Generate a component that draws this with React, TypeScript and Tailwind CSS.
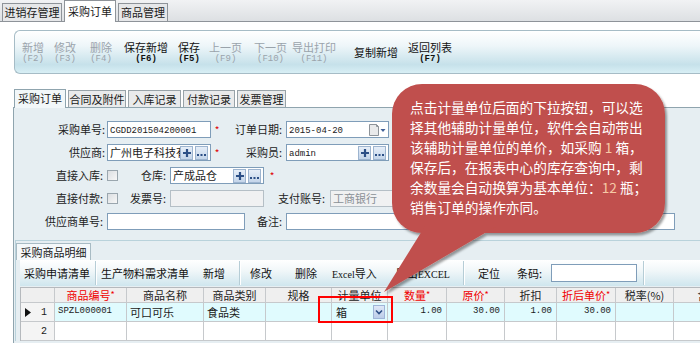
import React from "react";

const tools = [
  { label: "新增", key: "(F2)", off: true, cls: "ml-[7px]" },
  { label: "修改", key: "(F3)", off: true, cls: "ml-[10px]" },
  { label: "删除", key: "(F4)", off: true, cls: "ml-[14px]" },
  { label: "保存新增", key: "(F6)", off: false, cls: "ml-[12px]" },
  { label: "保存", key: "(F5)", off: false, cls: "ml-[10px]" },
  { label: "上一页", key: "(F9)", off: true, cls: "ml-[9px]" },
  { label: "下一页", key: "(F10)", off: true, cls: "ml-[12px]" },
  { label: "导出打印", key: "(F11)", off: true, cls: "ml-[5px]" },
  { label: "复制新增", key: "", off: false, cls: "ml-[18px]" },
  { label: "返回列表", key: "(F7)", off: false, cls: "ml-[10px]" },
];

const orderTabs = [
  { t: "采购订单", w: "w-[52px]", on: true },
  { t: "合同及附件", w: "w-[58px]", on: false },
  { t: "入库记录", w: "w-[53px]", on: false },
  { t: "付款记录", w: "w-[52px]", on: false },
  { t: "发票管理", w: "w-[49px]", on: false },
];

const heads = [
  { t: "", red: false },
  { t: "商品编号", red: true },
  { t: "商品名称", red: false },
  { t: "商品类别", red: false },
  { t: "规格", red: false },
  { t: "计量单位", red: false },
  { t: "数量", red: true },
  { t: "原价", red: true },
  { t: "折扣", red: false },
  { t: "折后单价", red: true },
  { t: "税率(%)", red: false },
  { t: "含税", red: false },
];

const gridCols =
  "grid grid-cols-[34px_72px_77px_62px_66px_56px_59px_58px_52px_59px_58px_70px]";

const mono = "font-['Liberation_Mono','DejaVu_Sans_Mono',monospace]";

function PlusBtn() {
  return (
    <span className="flex items-center justify-center w-[13px] h-[14px] border border-[#9db4cf] bg-gradient-to-b from-[#e6eef8] to-[#c4d5ea]">
      <svg width="10" height="10" viewBox="0 0 10 10">
        <path d="M5 1V9M1 5H9" stroke="#2c4f86" strokeWidth="2.2" />
      </svg>
    </span>
  );
}

function DotsBtn() {
  return (
    <span className="ml-[2px] flex items-end justify-center w-[13px] h-[14px] pb-[3px] border border-[#9db4cf] bg-gradient-to-b from-[#e6eef8] to-[#c4d5ea]">
      <svg width="9" height="2" viewBox="0 0 9 2">
        <rect x="0" y="0" width="2" height="2" fill="#2c4f86" />
        <rect x="3.5" y="0" width="2" height="2" fill="#2c4f86" />
        <rect x="7" y="0" width="2" height="2" fill="#2c4f86" />
      </svg>
    </span>
  );
}

function Field({
  w,
  children,
  gray,
  btns,
  extra,
}: {
  w: string;
  children?: React.ReactNode;
  gray?: boolean;
  btns?: boolean;
  extra?: React.ReactNode;
}) {
  return (
    <div
      className={`${w} h-[17px] shrink-0 flex items-center border pl-[2px] pr-[2px] ${
        gray ? "bg-[#f0f1f2] border-[#b5bfc6] text-[#8a9096]" : "bg-white border-[#7f9db9]"
      }`}
    >
      <span className="flex-1 min-w-0 overflow-hidden whitespace-nowrap leading-[15px]">{children}</span>
      {btns && (
        <span className="flex items-center">
          <PlusBtn />
          <DotsBtn />
        </span>
      )}
      {extra}
    </div>
  );
}

function Label({ w, children }: { w: string; children: React.ReactNode }) {
  return <span className={`${w} shrink-0 text-right whitespace-nowrap text-[#222]`}>{children}</span>;
}

function Star({ cls }: { cls: string }) {
  return <span className={`${cls} w-[6px] shrink-0 text-center text-[#e00000] text-[10px] leading-[10px]`}>*</span>;
}

function Check() {
  return <span className="ml-[4px] w-[11px] h-[11px] shrink-0 border border-[#9aa6ae] bg-gradient-to-br from-[#dcdfe2] to-[#f7f7f7]" />;
}

function CalendarIcon() {
  return (
    <svg width="18" height="12" viewBox="0 0 18 12" className="shrink-0">
      <path d="M1.5 0.5H8.5L10.5 2.5V11.5H1.5Z" fill="#e9eaeb" stroke="#8d9399" />
      <path d="M8.5 0.5V2.5H10.5" fill="none" stroke="#8d9399" />
      <path d="M12.5 5H17.5L15 8Z" fill="#3f5f96" />
    </svg>
  );
}

function TopTabs() {
  return (
    <div className="h-[22px] flex items-end pl-[2px] gap-[2px] bg-gradient-to-b from-[#f1f2f4] to-[#dde0e3] border-b border-[#8e9399]">
      <div className="w-[60px] h-[19px] -mb-px border border-[#8e9399] bg-[#e6e7e9] text-center leading-[17px]">进销存管理</div>
      <div className="w-[52px] h-[22px] -mb-px border border-b-0 border-[#8e9399] bg-white text-center leading-[20px]">采购订单</div>
      <div className="w-[50px] h-[19px] -mb-px border border-[#8e9399] bg-[#e6e7e9] text-center leading-[17px]">商品管理</div>
    </div>
  );
}

function Toolbar() {
  return (
    <div className="mt-[8px] ml-[14px] h-[44px] flex items-center rounded-l-[6px] border border-r-0 border-[#a6bcc6] bg-[linear-gradient(to_bottom,#ffffff_0%,#eef6f9_35%,#c6e1ea_80%,#d8eff5_100%)]">
      {tools.map((b) => (
        <div
          key={b.label}
          className={`${b.cls} flex flex-col items-center ${b.off ? "text-[#9aa3ab]" : "text-[#111]"}`}
        >
          <span className="leading-[13px] whitespace-nowrap">{b.label}</span>
          {b.key && <span className={`${mono} text-[9px] leading-[10px] ${b.off ? "" : "font-bold"}`}>{b.key}</span>}
        </div>
      ))}
    </div>
  );
}

function OrderTabs() {
  return (
    <div className="mt-[15px] ml-[14px] h-[18px] flex items-end gap-[2px]">
      {orderTabs.map((t) => (
        <div
          key={t.t}
          className={`${t.w} text-center whitespace-nowrap border border-b-0 ${
            t.on
              ? "relative z-10 h-[19px] -mb-px bg-[#f2f7f9] border-[#8fa4ae] leading-[17px]"
              : "h-[17px] bg-[#e9eaeb] border-[#98a2a8] leading-[16px]"
          }`}
        >
          {t.t}
        </div>
      ))}
    </div>
  );
}

function Form() {
  return (
    <div className="pt-[13px] flex flex-col gap-[6px]">
      <div className="h-[17px] flex items-center">
        <Label w="w-[91px]">采购单号:</Label>
        <div className="ml-[2px]">
          <Field w="w-[104px]">
            <span className={`${mono} text-[9px]`}>CGDD201504200001</span>
          </Field>
        </div>
        <Star cls="ml-[3px]" />
        <Label w="w-[62px]">订单日期:</Label>
        <div className="ml-[4px]">
          <Field w="w-[103px]" extra={<CalendarIcon />}>
            <span className={`${mono} text-[9px]`}>2015-04-20</span>
          </Field>
        </div>
      </div>
      <div className="h-[17px] flex items-center">
        <Label w="w-[91px]">供应商:</Label>
        <div className="ml-[2px]">
          <Field w="w-[104px]" btns>
            广州电子科技有
          </Field>
        </div>
        <Star cls="ml-[3px]" />
        <Label w="w-[62px]">采购员:</Label>
        <div className="ml-[4px]">
          <Field w="w-[103px]" btns>
            <span className={`${mono} text-[9px]`}>admin</span>
          </Field>
        </div>
      </div>
      <div className="h-[17px] flex items-center">
        <Label w="w-[89px]">直接入库:</Label>
        <Check />
        <Label w="w-[48px]">仓库:</Label>
        <div className="ml-[4px]">
          <Field w="w-[94px]" btns>
            产成品仓
          </Field>
        </div>
        <Star cls="ml-[5px]" />
      </div>
      <div className="h-[17px] flex items-center">
        <Label w="w-[89px]">直接付款:</Label>
        <Check />
        <Label w="w-[48px]">发票号:</Label>
        <div className="ml-[4px]">
          <Field w="w-[94px]" gray />
        </div>
        <Label w="w-[61px]">支付账号:</Label>
        <div className="ml-[5px]">
          <Field w="w-[100px]" gray>
            工商银行
          </Field>
        </div>
      </div>
      <div className="h-[17px] flex items-center">
        <Label w="w-[89px]">供应商单号:</Label>
        <div className="ml-[4px]">
          <Field w="w-[138px]" />
        </div>
        <Label w="w-[37px]">备注:</Label>
        <div className="ml-[4px]">
          <Field w="w-[389px]" />
        </div>
      </div>
    </div>
  );
}

function Sep({ cls }: { cls: string }) {
  return <span className={`${cls} w-[2px] h-[24px] shrink-0 border-l border-[#b6cdd6] border-r border-r-white`} />;
}

function DetailBar() {
  return (
    <div className="ml-[4px] h-[26px] flex items-center whitespace-nowrap text-[#111] bg-[linear-gradient(to_bottom,#ffffff_0%,#f1f7f9_40%,#cfe6ee_100%)]">
      <span className="ml-[4px]">采购申请清单</span>
      <Sep cls="ml-[5px]" />
      <span className="ml-[4px]">生产物料需求清单</span>
      <span className="ml-[14px]">新增</span>
      <Sep cls="ml-[14px]" />
      <span className="ml-[9px]">修改</span>
      <span className="ml-[23px]">删除</span>
      <span className="ml-[15px]">
        <span className="font-['Liberation_Serif',serif] text-[10px]">Excel</span>导入
      </span>
      <span className="ml-[19px]">
        导出<span className="font-['Liberation_Serif',serif] text-[10px]">EXCEL</span>
      </span>
      <Sep cls="ml-[13px]" />
      <span className="ml-[13px]">定位</span>
      <span className="ml-[17px]">条码:</span>
      <span className="ml-[9px] w-[86px] h-[18px] shrink-0 border border-[#7f9db9] bg-white" />
      <Sep cls="ml-[6px]" />
    </div>
  );
}

function Grid() {
  const cell = "border-r border-b border-[#c6c9cc] h-full flex items-center overflow-hidden whitespace-nowrap";
  return (
    <div className="mt-[1px] ml-[4px] border-l border-t border-[#b5b9bd]">
      <div className={`${gridCols} h-[15px] bg-[#efefef]`}>
        {heads.map((h, i) => (
          <div key={i} className={`${cell} justify-center ${h.red ? "text-[#f00000]" : "text-[#222]"}`}>
            {h.t}
            {h.red && <span className="text-[9px]">*</span>}
          </div>
        ))}
      </div>
      <div className={`${gridCols} h-[19px] bg-[#e0fbfe]`}>
        <div className={`${cell} bg-[#f4f4f4] justify-between pl-[4px] pr-[7px]`}>
          <svg width="6" height="9" viewBox="0 0 6 9">
            <path d="M0 0L6 4.5L0 9Z" fill="#111" />
          </svg>
          <span className={`${mono} text-[10px]`}>1</span>
        </div>
        <div className={`${cell} pl-[3px] ${mono} text-[9px]`}>SPZL000001</div>
        <div className={`${cell} pl-[3px]`}>可口可乐</div>
        <div className={`${cell} pl-[3px]`}>食品类</div>
        <div className={cell} />
        <div className={`${cell} pl-[4px] justify-between pr-[2px]`}>
          <span>箱</span>
          <span className="w-[12px] h-[14px] flex items-center justify-center border border-[#9fb5d8] bg-gradient-to-b from-[#dfe8f7] to-[#bccde9]">
            <svg width="8" height="6" viewBox="0 0 8 6">
              <path d="M1 1.5L4 4.5L7 1.5" fill="none" stroke="#2c4f86" strokeWidth="1.6" />
            </svg>
          </span>
        </div>
        <div className={`${cell} justify-end pr-[4px] ${mono} text-[9px]`}>1.00</div>
        <div className={`${cell} justify-end pr-[4px] ${mono} text-[9px]`}>30.00</div>
        <div className={`${cell} justify-end pr-[4px] ${mono} text-[9px]`}>1.00</div>
        <div className={`${cell} justify-end pr-[4px] ${mono} text-[9px]`}>30.00</div>
        <div className={cell} />
        <div className={cell} />
      </div>
      <div className={`${gridCols} h-[19px] bg-white`}>
        <div className={`${cell} bg-[#f4f4f4] justify-end pr-[7px]`}>
          <span className={`${mono} text-[10px]`}>2</span>
        </div>
        {Array.from({ length: 11 }).map((_, i) => (
          <div key={i} className={cell} />
        ))}
      </div>
    </div>
  );
}

function Panel() {
  return (
    <div className="ml-[13px] h-[236px] border-l border-t border-[#8fa4ae] bg-[#e6eef2]">
      <Form />
      <div className="ml-[1px] mt-[10px] border-t border-l border-[#b9d2db] pt-[2px]">
        <div className="w-[75px] h-[17px] bg-[#f4f8fa] border border-b-0 border-[#a8bbc4] text-center leading-[16px]">
          采购商品明细
        </div>
        <DetailBar />
        <Grid />
      </div>
    </div>
  );
}

function Callout() {
  return (
    <>
      <svg className="absolute left-0 top-0 pointer-events-none" width="700" height="354" viewBox="0 0 700 354">
        <defs>
          <filter id="sh" x="-10%" y="-10%" width="120%" height="130%">
            <feDropShadow dx="2" dy="2.5" stdDeviation="1.2" floodColor="#000" floodOpacity="0.38" />
          </filter>
        </defs>
        <g filter="url(#sh)" fill="#c0504d">
          <rect x="392" y="84" width="273" height="149" rx="30" ry="30" />
          <path d="M425 226L497 226L384 292Z" />
        </g>
      </svg>
      <div className="absolute left-[410px] top-[97px] text-white text-[13.7px] leading-[20px] whitespace-nowrap">
        <div>点击计量单位后面的下拉按钮，可以选</div>
        <div>择其他辅助计量单位，软件会自动带出</div>
        <div>
          该辅助计量单位的单价，如采购 <span className="text-[#f6c9a6]">1</span> 箱，
        </div>
        <div>保存后，在报表中心的库存查询中，剩</div>
        <div>
          余数量会自动换算为基本单位：<span className="text-[#f6c9a6]">12</span> 瓶；
        </div>
        <div>销售订单的操作亦同。</div>
      </div>
    </>
  );
}

export default function App() {
  return (
    <div className="relative w-[700px] h-[354px] overflow-hidden bg-white text-[11px] text-[#1a1a1a] font-['Noto_Sans_CJK_SC','Noto_Sans',sans-serif]">
      <TopTabs />
      <Toolbar />
      <OrderTabs />
      <Panel />
      <div className="absolute left-[318px] top-[296px] w-[75px] h-[27px] border-2 border-[#ff0000]" />
      <Callout />
    </div>
  );
}
